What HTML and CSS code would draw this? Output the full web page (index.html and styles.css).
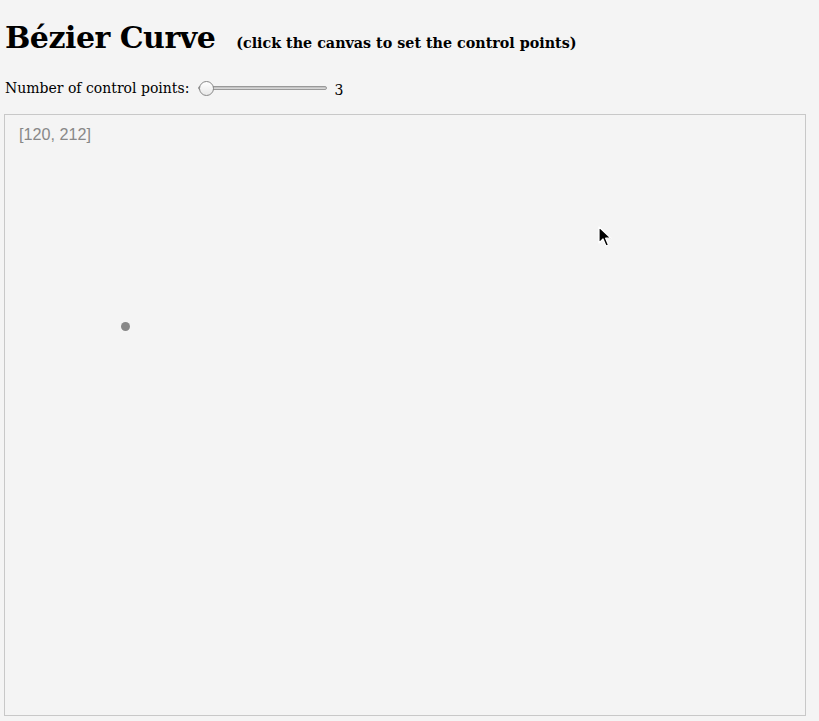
FILE: index.html
```html
<!DOCTYPE html>
<html>
<head>
<meta charset="utf-8">
<link rel="stylesheet" href="styles.css">
</head>
<body>
<div class="page">
  <h1 class="title">Bézier Curve <small class="hint">(click the canvas to set the control points)</small></h1>
  <div class="controls">
    <label class="ctl-label" for="n">Number of control points:</label>
    <input class="slider" id="n" type="range" min="3" max="10" value="3">
    <span class="ctl-value">3</span>
  </div>
  <div class="canvas">
    <span class="coords">[120, 212]</span>
    <span class="point"></span>
    <svg class="cursor" width="14" height="22" viewBox="0 0 14 22">
      <path d="M1 1 L1 17 L5 13 L8 20 L10.5 19 L7.6 12.2 L13 12.2 Z" fill="#000" stroke="#fff" stroke-width="1.2" stroke-linejoin="round"/>
    </svg>
  </div>
</div>
</body>
</html>
```
FILE: styles.css
```css
html, body {
  margin: 0;
  padding: 0;
  background: #f4f4f4;
}
.page {
  padding: 0 4px;
  font-family: "DejaVu Serif", "Liberation Serif", serif;
  color: #000;
}
.title {
  margin: 0;
  padding-top: 18px;
  font-size: 30px;
  line-height: 40px;
  font-weight: bold;
  letter-spacing: -0.5px;
  padding-left: 1px;
}
.hint {
  font-size: 14.3px;
  font-weight: bold;
  margin-left: 11px;
  letter-spacing: 0;
}
.controls {
  display: flex;
  align-items: center;
  margin-top: 10px;
  padding-left: 1px;
  height: 30px;
  font-size: 14px;
}
.ctl-label {
  margin-right: 9px;
}
.slider {
  -webkit-appearance: none;
  appearance: none;
  width: 129px;
  height: 16px;
  margin: 0 7px 0 0;
  background: transparent;
}
.slider::-webkit-slider-runnable-track {
  height: 4px;
  border: 1px solid #999;
  border-radius: 3px;
  background: linear-gradient(#bbb, #ddd);
}
.slider::-webkit-slider-thumb {
  -webkit-appearance: none;
  width: 15px;
  height: 15px;
  margin-top: -6.5px;
  border-radius: 50%;
  border: 1px solid #888;
  background: linear-gradient(#fff, #e8e8e8);
  box-sizing: border-box;
}
.ctl-value {
  padding-top: 4px;
}
.canvas {
  position: relative;
  width: 800px;
  height: 600px;
  border: 1px solid #c8c8c8;
  margin-top: 11px;
}
.coords {
  position: absolute;
  left: 14px;
  top: 10px;
  font-family: "Liberation Sans", Arial, sans-serif;
  font-size: 16.2px;
  color: #888;
}
.point {
  position: absolute;
  left: 116px;
  top: 207px;
  width: 9px;
  height: 9px;
  border-radius: 50%;
  background: #888;
}
.cursor {
  position: absolute;
  left: 593px;
  top: 111px;
}
```
